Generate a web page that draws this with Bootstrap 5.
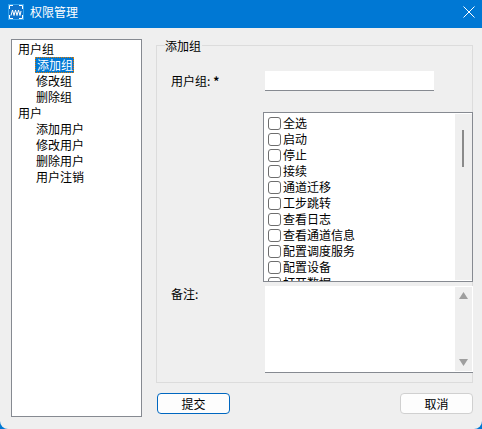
<!DOCTYPE html>
<html lang="zh">
<head>
<meta charset="utf-8">
<title>权限管理</title>
<link href="https://cdn.jsdelivr.net/npm/bootstrap@5.3.0/dist/css/bootstrap.min.css" rel="stylesheet">
<style>
html{height:429px;overflow:hidden;background:#0078d4}
body{height:429px;overflow:hidden;background:#efefef;color:#000;font:12px/16px "Noto Sans CJK SC",sans-serif;border-radius:0 0 8px 8px}
.title-strip{height:28px;background:#0078d4;color:#fff;padding:0 0 4px 8px;gap:6px;font-size:12px}
.close-x{margin-right:7px}
.main-wrap{padding:11px 9px 0 11px;gap:14px}
.tree-pane{width:131px;height:378px;background:#fff;border:1px solid #868a91;padding:1px 6px;margin:0}
.tree-pane li.sub{padding-left:18px}
.tree-sel{display:inline-block;background:#0078d4;color:#fff;outline:1px dotted #e07b00;outline-offset:-1px;padding:0 1px 0 2px;margin-left:-1px}
.right-pane{width:317px}
.perm-box{height:346px;border:1px solid #dcdcdc;margin:-2px 0 0;padding:0;display:block;min-width:0}
.perm-box legend{float:none;width:auto;font-size:12px;line-height:16px;margin:0 0 0 8px;padding:1px 1px 0 0}
.lbl-col{width:92px;flex:none}
.user-row{margin-top:17px;height:20px;align-items:center;padding-left:14px}
.user-input{width:169px;height:20px;margin-left:2px;border:0;border-bottom:1px solid #868a91;border-radius:0;background:#fff;padding:0 4px;font-size:12px;box-shadow:none;flex:none}
.star{font-weight:700;margin-left:3px}
.list-row{margin-top:21px;padding-left:14px}
.check-pane{width:210px;height:170px;border:1px solid #868a91;background:#fff;overflow:hidden;flex:none}
.check-list{padding:2px 0 0 4px;height:168px;overflow:hidden;margin:0}
.check-list li{height:16px;gap:2px;display:flex;align-items:center}
.check-list .form-check-input{width:13px;height:13px;margin:0;flex:none;border:1px solid #6e6e6e;border-radius:3px;background-color:#fff}
.track-a{width:17px;background:#efefef;margin:1px 0;padding:16px 0 0 7px}
.thumb-a{width:2px;height:37px;background:#8a8a8a}
.note-row{margin-top:4px;padding-left:14px}
.note-wrap{width:208px;height:87px;margin-left:2px;background:#fff;border-bottom:1px solid #868a91;flex:none}
.note-area{border:0;border-radius:0;background:#fff;resize:none;box-shadow:none;height:86px;min-height:0;padding:2px 4px}
.track-b{width:17px;background:#efefef;margin:1px 1px 1px 0;padding:5px 0;flex:none}
.foot-row{margin-top:10px;margin-left:1px}
.win-btn{width:73px;height:21px;padding:0;font-size:12px;line-height:19px;background:#fdfdfd;border:1px solid #d0d0d0;border-radius:4px;color:#000}
.win-btn.on{border-color:#0067c0}
</style>
</head>
<body>
<div class="title-strip d-flex align-items-center">
  <svg width="16" height="16" viewBox="0 0 16 16" aria-hidden="true"><rect width="16" height="16" fill="#35a4ee"/><rect x="1" y="1" width="14" height="14" fill="#0f74cc"/><path d="M1.500 5V1.500H5M11 1.500h3.500V5M1.500 11v3.500H5M11 14.500h3.500V11" fill="none" stroke="#fff"/><path d="M3 11.500 4.500 6l1.500 5.500L7.500 6 9 11.500 10.500 6l1.500 5.500L13 7" fill="none" stroke="#fff"/></svg>
  <span>权限管理</span>
  <svg class="close-x ms-auto" width="12" height="12" viewBox="0 0 12 12" aria-hidden="true"><path d="M.5.500 11.500 11.500M11.500.500.500 11.500" stroke="#fff" fill="none"/></svg>
</div>
<div class="main-wrap d-flex">
  <ul class="tree-pane list-unstyled">
    <li>用户组</li>
    <li class="sub"><span class="tree-sel">添加组</span></li>
    <li class="sub">修改组</li>
    <li class="sub">删除组</li>
    <li>用户</li>
    <li class="sub">添加用户</li>
    <li class="sub">修改用户</li>
    <li class="sub">删除用户</li>
    <li class="sub">用户注销</li>
  </ul>
  <div class="right-pane">
    <fieldset class="perm-box">
      <legend>添加组</legend>
      <div class="user-row d-flex">
        <label class="lbl-col" for="gname">用户组:<span class="star">*</span></label>
        <input id="gname" class="form-control user-input" type="text">
      </div>
      <div class="list-row d-flex">
        <div class="lbl-col"></div>
        <div class="check-pane d-flex">
          <ul class="check-list list-unstyled flex-grow-1">
            <li><input class="form-check-input" type="checkbox">全选</li>
            <li><input class="form-check-input" type="checkbox">启动</li>
            <li><input class="form-check-input" type="checkbox">停止</li>
            <li><input class="form-check-input" type="checkbox">接续</li>
            <li><input class="form-check-input" type="checkbox">通道迁移</li>
            <li><input class="form-check-input" type="checkbox">工步跳转</li>
            <li><input class="form-check-input" type="checkbox">查看日志</li>
            <li><input class="form-check-input" type="checkbox">查看通道信息</li>
            <li><input class="form-check-input" type="checkbox">配置调度服务</li>
            <li><input class="form-check-input" type="checkbox">配置设备</li>
            <li><input class="form-check-input" type="checkbox">打开数据</li>
          </ul>
          <div class="track-a"><div class="thumb-a"></div></div>
        </div>
      </div>
      <div class="note-row d-flex">
        <label class="lbl-col" for="gnote">备注:</label>
        <div class="note-wrap d-flex">
          <textarea id="gnote" class="form-control note-area flex-grow-1"></textarea>
          <div class="track-b d-flex flex-column justify-content-between align-items-center">
            <svg width="9" height="7" viewBox="0 0 9 7" aria-hidden="true"><path d="M4.500 0 9 7H0z" fill="#9e9e9e"/></svg>
            <svg width="9" height="7" viewBox="0 0 9 7" aria-hidden="true"><path d="M0 0h9L4.500 7z" fill="#9e9e9e"/></svg>
          </div>
        </div>
      </div>
    </fieldset>
    <div class="foot-row d-flex justify-content-between">
      <button class="btn win-btn on" type="button">提交</button>
      <button class="btn win-btn" type="button">取消</button>
    </div>
  </div>
</div>
</body>
</html>
